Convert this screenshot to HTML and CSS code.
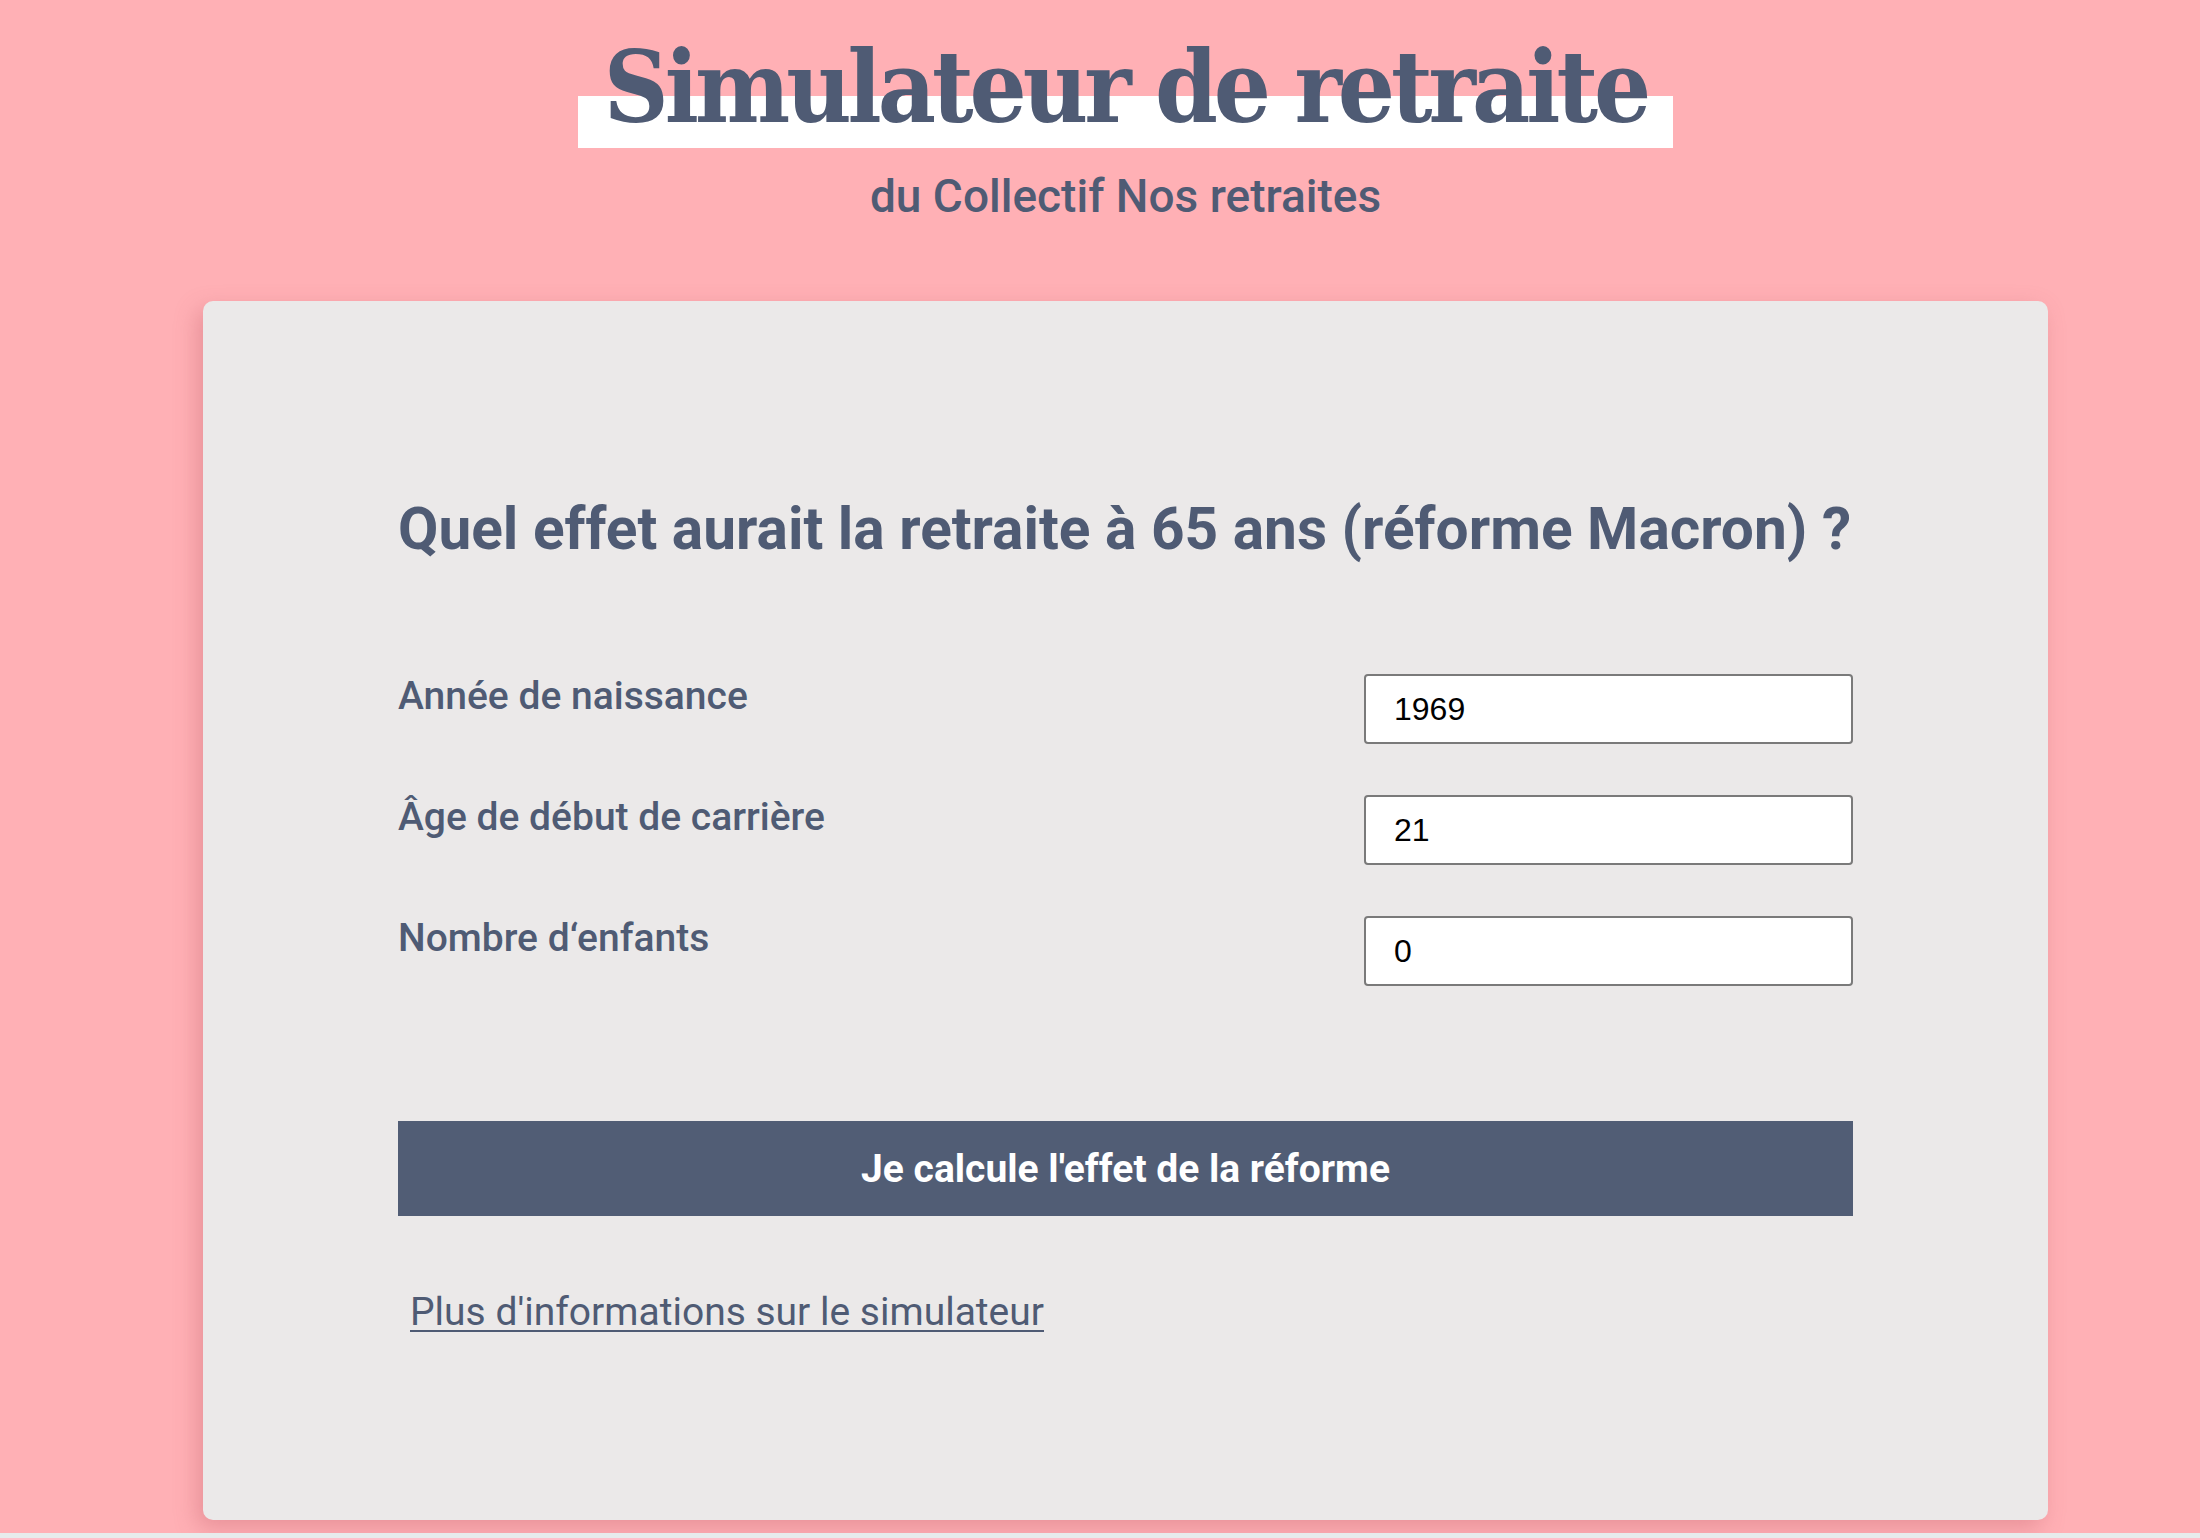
FILE: index.html
```html
<!DOCTYPE html>
<html lang="fr">
<head>
<meta charset="utf-8">
<title>Simulateur de retraite</title>
<link rel="stylesheet" href="styles.css">
</head>
<body>
<div class="page">
  <header class="masthead">
    <h1 class="title"><span class="title-text">Simulateur de retraite</span></h1>
    <p class="subtitle">du Collectif Nos retraites</p>
  </header>
  <main class="card">
    <h2 class="question">Quel effet aurait la retraite à 65 ans (réforme Macron) ?</h2>
    <form class="form">
      <div class="fields">
        <div class="field">
          <label class="field-label" for="annee">Année de naissance</label>
          <input class="field-input" id="annee" type="text" value="1969">
        </div>
        <div class="field">
          <label class="field-label" for="debut">Âge de début de carrière</label>
          <input class="field-input" id="debut" type="text" value="21">
        </div>
        <div class="field">
          <label class="field-label" for="enfants">Nombre d‘enfants</label>
          <input class="field-input" id="enfants" type="text" value="0">
        </div>
      </div>
      <button class="submit" type="button">Je calcule l'effet de la réforme</button>
    </form>
    <a class="info-link" href="#">Plus d'informations sur le simulateur</a>
  </main>
</div>
</body>
</html>
```
FILE: styles.css
```css
html {
  background: #e7ecec;
}
body {
  margin: 0;
  height: 1533px;
  background: #ffb0b5;
  color: #4f5b74;
  font-family: Roboto, "Noto Sans", sans-serif;
  overflow: hidden;
}
.page {
  padding: 0 152px 0 203px;
}
.masthead {
  text-align: center;
}
.title {
  margin: 24px 0 0;
  font-family: "DejaVu Serif", "Liberation Serif", serif;
  font-stretch: condensed;
  font-weight: 700;
  font-size: 100px;
  line-height: 126px;
  letter-spacing: -4px;
}
.title-text {
  display: inline-block;
  padding: 0 26px;
  background: linear-gradient(to bottom, transparent 0, transparent 72px, #ffffff 72px, #ffffff 124px, transparent 124px);
}
.subtitle {
  margin: 20px 0 0;
  font-size: 46px;
  font-weight: 500;
  line-height: 53px;
}
.card {
  margin-top: 78px;
  height: 1219px;
  box-sizing: border-box;
  padding: 194px 195px 0;
  background: #ebe9e9;
  border-radius: 10px;
  box-shadow: -6px 8px 22px rgba(190, 90, 100, 0.35);
}
.question {
  margin: 0;
  font-size: 58.6px;
  font-weight: 700;
  line-height: 68px;
  white-space: nowrap;
}
.form {
  margin: 111px 0 0;
}
.fields {
  display: flex;
  flex-direction: column;
  gap: 51px;
}
.field {
  display: flex;
  justify-content: space-between;
  align-items: flex-start;
  height: 70px;
}
.field-label {
  font-size: 39px;
  font-weight: 500;
  line-height: 44px;
}
.field-input {
  width: 489px;
  height: 70px;
  box-sizing: border-box;
  margin: 0;
  padding: 0 28px;
  border: 2px solid #7a7a7a;
  border-radius: 4px;
  background: #ffffff;
  color: #000000;
  font-family: "Liberation Sans", Arial, sans-serif;
  font-size: 32px;
}
.submit {
  display: block;
  width: 100%;
  height: 95px;
  margin-top: 135px;
  border: 0;
  background: #515d75;
  color: #ffffff;
  font-family: Roboto, "Noto Sans", sans-serif;
  font-size: 39px;
  font-weight: 700;
}
.info-link {
  display: inline-block;
  margin: 73px 0 0 12px;
  color: #4f5b74;
  font-size: 39px;
  line-height: 46px;
  text-decoration: underline;
  text-underline-offset: 5px;
  text-decoration-thickness: 2px;
}
```
